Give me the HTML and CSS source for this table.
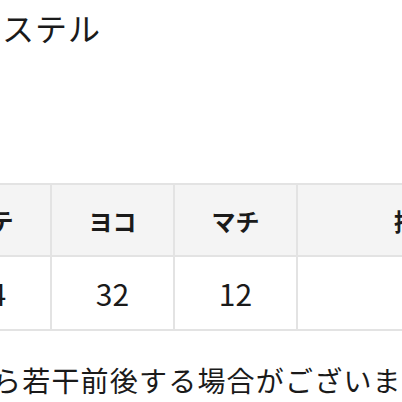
FILE: index.html
```html
<!DOCTYPE html>
<html lang="ja">
<head>
<meta charset="utf-8">
<link rel="stylesheet" href="styles.css">
</head>
<body>
<div class="page">
  <p class="title">ステル</p>
  <table class="size">
    <thead>
      <tr><th>タテ</th><th>ヨコ</th><th>マチ</th><th class="wide">持ち手</th></tr>
    </thead>
    <tbody>
      <tr><td>24</td><td>32</td><td>12</td><td class="wide"></td></tr>
    </tbody>
  </table>
  <p class="note">ら若干前後する場合がございます。</p>
</div>
</body>
</html>
```
FILE: styles.css
```css
html, body {
  margin: 0;
  padding: 0;
  background: #ffffff;
}
body {
  width: 402px;
  height: 402px;
  overflow: hidden;
  font-family: "Noto Sans CJK JP", "Noto Sans", sans-serif;
  color: #1a1a1a;
}
.page {
  padding-top: 7px;
  white-space: nowrap;
}
.title {
  margin: 0 0 0 2px;
  font-size: 32px;
  line-height: 40px;
  font-weight: 400;
  letter-spacing: 1px;
}
.size {
  margin: 136px 0 0 -73px;
  border-collapse: collapse;
  table-layout: fixed;
  width: 635px;
}
.size th, .size td {
  width: 121px;
  border: 2px solid #e3e3e3;
  text-align: center;
  padding: 0;
}
.size th.wide, .size td.wide {
  width: 264px;
}
.size th {
  height: 70px;
  background: #f4f4f4;
  font-size: 24px;
  font-weight: 700;
}
.size td {
  height: 72px;
  font-size: 30px;
  font-weight: 400;
}
.note {
  margin: 31px 0 0 -7px;
  font-size: 28px;
  line-height: 36px;
  letter-spacing: 1.2px;
}
```
